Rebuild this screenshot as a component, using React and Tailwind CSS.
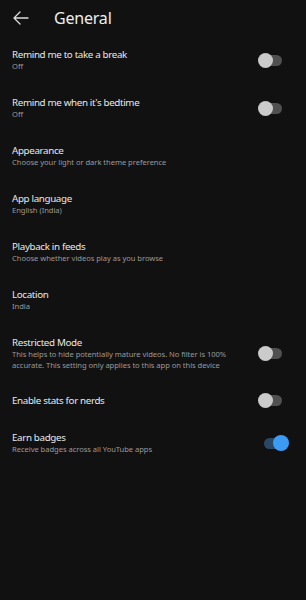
import React from "react";

const rows = [
  { title: "Remind me to take a break", sub: "Off", toggle: "off" },
  { title: "Remind me when it's bedtime", sub: "Off", toggle: "off" },
  { title: "Appearance", sub: "Choose your light or dark theme preference" },
  { title: "App language", sub: "English (India)" },
  { title: "Playback in feeds", sub: "Choose whether videos play as you browse" },
  { title: "Location", sub: "India" },
  {
    title: "Restricted Mode",
    sub: "This helps to hide potentially mature videos. No filter is 100% accurate. This setting only applies to this app on this device",
    toggle: "off",
    pad: "pt-[12px] pb-[10px]",
  },
  { title: "Enable stats for nerds", toggle: "off", pad: "pt-[11px] pb-[11px]" },
  { title: "Earn badges", sub: "Receive badges across all YouTube apps", toggle: "on" },
];

function Toggle({ on }) {
  return (
    <div className="relative w-[31px] h-[16px] shrink-0">
      <div
        className={
          "absolute top-[2.5px] h-[11px] rounded-full " +
          (on ? "left-[6px] w-[18px] bg-[#2a4866]" : "left-[4px] w-[20px] bg-[#505050]")
        }
      />
      <div
        className={
          "absolute rounded-full " +
          (on
            ? "left-[15px] top-0 w-[16px] h-[16px] bg-[#3b9bf5]"
            : "left-0 top-[0.5px] w-[15px] h-[15px] bg-[#cbcbcb]")
        }
      />
    </div>
  );
}

export default function App() {
  return (
    <div
      className="w-[306px] h-[600px] bg-[#111111] text-[#e6e6e6] overflow-hidden"
      style={{ fontFamily: '"Noto Sans", "Open Sans", sans-serif' }}
    >
      <div className="h-[36px] flex items-center">
        <svg width="16" height="14" viewBox="0 0 16 14" className="ml-[13px]" fill="none">
          <path d="M1 7H15M1 7L7 1M1 7L7 13" stroke="#dcdcdc" strokeWidth="1.3" strokeLinecap="round" strokeLinejoin="round" />
        </svg>
        <span className="ml-[25px] text-[16px] leading-[22px] text-[#eeeeee] tracking-[-0.2px]">General</span>
      </div>
      {rows.map((r) => (
        <div key={r.title} className={"flex items-center pl-[12px] pr-[17px] " + (r.pad || "py-[12px]")}>
          <div className="flex-1 min-w-0 pr-[18px]">
            <div className="h-[13px] text-[9.8px] leading-[13px] text-[#e8e8e8] tracking-[-0.35px] whitespace-nowrap">{r.title}</div>
            {r.sub && (
              <div className="text-[7.6px] leading-[11px] text-[#9a9a9a] tracking-[-0.05px]">{r.sub}</div>
            )}
          </div>
          {r.toggle && <Toggle on={r.toggle === "on"} />}
        </div>
      ))}
    </div>
  );
}
